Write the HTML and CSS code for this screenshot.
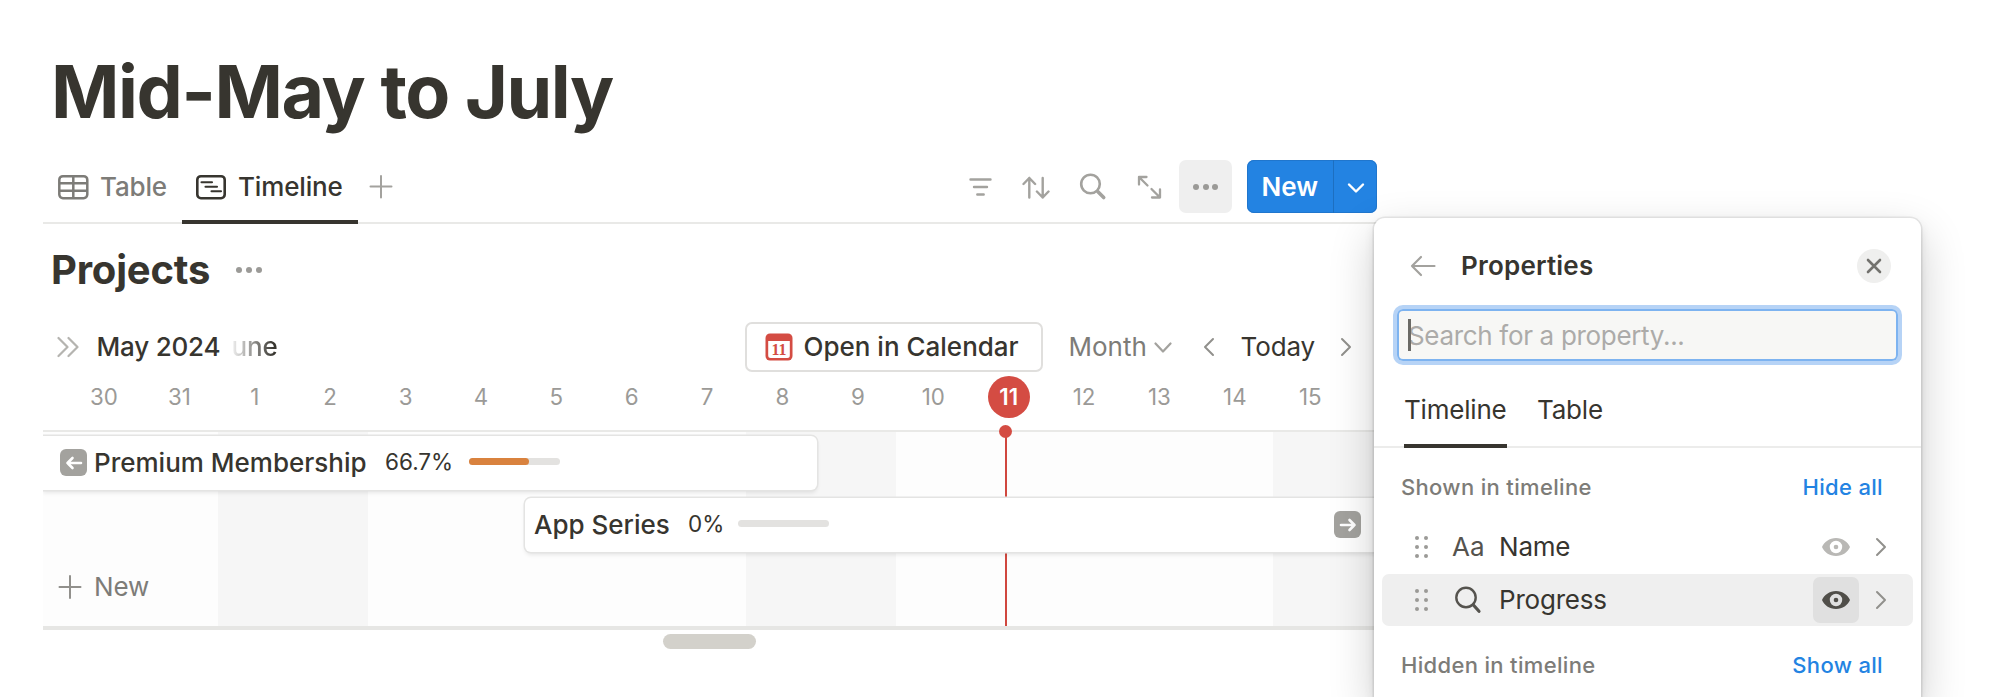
FILE: index.html
```html
<!DOCTYPE html>
<html lang="en">
<head>
<meta charset="utf-8">
<title>Mid-May to July</title>
<link rel="stylesheet" href="styles.css">
</head>
<body>
<main class="page">
  <h1 class="title">Mid-May to July</h1>

  <nav class="viewbar">
    <div class="tab tab-table">
      <svg class="icon" width="31" height="26" viewBox="0 0 31 26" fill="none" stroke="currentColor" stroke-width="2.5"><rect x="1.3" y="2.2" width="28" height="22" rx="3.6"/><path d="M1.3 9.3h28M1.3 16.7h28M15.3 2.2v22"/></svg>
      <span class="tab-label label-table">Table</span>
    </div>
    <div class="tab tab-timeline">
      <svg class="icon" width="31" height="26" viewBox="0 0 31 26" fill="none" stroke="currentColor" stroke-width="2.6" stroke-linecap="round"><rect x="1.3" y="2.2" width="27.4" height="22" rx="3.6"/><path stroke-width="2.1" d="M5.500 8.300h10.500M9.500 12.800h11.500M15.500 17.300h9.500"/></svg>
      <span class="tab-label label-timeline">Timeline</span>
    </div>
    <svg class="icon add-view" width="24" height="24" viewBox="0 0 24 24" fill="none" stroke="currentColor" stroke-width="2" stroke-linecap="round"><path d="M1.500 11.500h21M12 1v21.500"/></svg>

    <div class="actions">
      <span class="action"><svg width="28" height="28" viewBox="0 0 28 28" fill="none" stroke="currentColor" stroke-width="2.400" stroke-linecap="round"><path d="M4.500 6.500h20M8 14h13M11.300 21.500h6.400"/></svg></span>
      <span class="action"><svg width="28" height="28" viewBox="0 0 28 28" fill="none" stroke="currentColor" stroke-width="2.400" stroke-linecap="round" stroke-linejoin="round"><path d="M7.300 24.500V5M1.500 11l5.800-6 5.800 6M20.700 5v19.500M14.900 18.500l5.800 6 5.800-6"/></svg></span>
      <span class="action"><svg width="28" height="28" viewBox="0 0 28 28" fill="none" stroke="currentColor" stroke-width="2.600" stroke-linecap="round"><circle cx="11.500" cy="11" r="9.300"/><path stroke-width="3.600" d="M18.700 18.500l6 6"/></svg></span>
      <span class="action"><svg width="28" height="28" viewBox="0 0 28 28" fill="none" stroke="currentColor" stroke-width="2.300" stroke-linecap="round" stroke-linejoin="round"><path d="M11.500 4H4v7.500M4 4l8.500 8.500M17 24.500h8v-8M25 24.500L16.500 16"/></svg></span>
      <span class="action"><span class="more"><i></i><i></i><i></i></span></span>
      <div class="new-button">
        <span class="new-label">New</span>
        <span class="new-caret"><svg width="18" height="12" viewBox="0 0 18 12" fill="none" stroke="currentColor" stroke-width="2.400" stroke-linecap="round" stroke-linejoin="round"><path d="M2 2.500l7 7 7-7"/></svg></span>
      </div>
    </div>
  </nav>

  <header class="database">
    <h2 class="database-name">Projects</h2>
    <span class="dots"><i></i><i></i><i></i></span>
  </header>

  <div class="controls">
    <svg class="expand" width="23" height="22" viewBox="0 0 23 22" fill="none" stroke="currentColor" stroke-width="2.200" stroke-linecap="round" stroke-linejoin="round"><path d="M1.500 2l9 9-9 9M11.500 2l9 9-9 9"/></svg>
    <span class="month">May 2024</span>
    <span class="next-month">une</span>
    <button class="calendar-button">
      <svg width="28" height="28" viewBox="0 0 28 28"><rect x=".5" y=".5" width="27" height="27" rx="4.500" fill="#d44c43"/><path d="M3.200 8h21.600v14.500a2.500 2.500 0 0 1-2.500 2.500H5.700a2.500 2.500 0 0 1-2.500-2.500z" fill="#fff"/><text class="calendar-day" x="14" y="22.300" text-anchor="middle">11</text></svg>
      <span class="calendar-label">Open in Calendar</span>
    </button>
    <span class="scale">Month</span>
    <svg class="scale-caret" width="18" height="12" viewBox="0 0 18 12" fill="none" stroke="currentColor" stroke-width="2.200" stroke-linecap="round" stroke-linejoin="round"><path d="M1.500 1.500l7.500 8 7.500-8"/></svg>
    <svg class="prev" width="12" height="20" viewBox="0 0 12 20" fill="none" stroke="currentColor" stroke-width="2" stroke-linecap="round" stroke-linejoin="round"><path d="M10 2l-8 8 8 8"/></svg>
    <span class="today">Today</span>
    <svg class="next" width="12" height="20" viewBox="0 0 12 20" fill="none" stroke="currentColor" stroke-width="2" stroke-linecap="round" stroke-linejoin="round"><path d="M2 2l8 8-8 8"/></svg>
  </div>

  <div class="days">
    <span>30</span><span>31</span><span>1</span><span>2</span><span>3</span><span>4</span><span>5</span><span>6</span><span>7</span><span>8</span><span>9</span><span>10</span><span><b>11</b></span><span>12</span><span>13</span><span>14</span><span>15</span>
  </div>

  <section class="timeline">
    <div class="now"></div>
    <div class="bar bar-premium">
      <span class="jump"><svg width="18" height="16" viewBox="0 0 18 16" fill="none" stroke="currentColor" stroke-width="2.600" stroke-linecap="round" stroke-linejoin="round"><path d="M16 8H2.500M7.500 3l-5 5 5 5"/></svg></span>
      <span class="bar-name name-premium">Premium Membership</span>
      <span class="percent percent-premium">66.7%</span>
      <span class="meter"><span class="meter-fill" style="width:66.7%"></span></span>
    </div>
    <div class="bar bar-app">
      <span class="bar-name name-app">App Series</span>
      <span class="percent percent-app">0%</span>
      <span class="meter"></span>
      <span class="jump jump-right"><svg width="18" height="16" viewBox="0 0 18 16" fill="none" stroke="currentColor" stroke-width="2.600" stroke-linecap="round" stroke-linejoin="round"><path d="M2 8h13.500M10.500 3l5 5-5 5"/></svg></span>
    </div>
    <div class="new-row">
      <svg width="24" height="24" viewBox="0 0 24 24" fill="none" stroke="currentColor" stroke-width="2" stroke-linecap="round"><path d="M1.500 12h21M12 1v22"/></svg>
      <span class="new-row-label">New</span>
    </div>
  </section>
  <div class="scrollbar"></div>
</main>

<aside class="popover">
  <header class="popover-head">
    <svg class="back" width="26" height="22" viewBox="0 0 26 22" fill="none" stroke="currentColor" stroke-width="2.200" stroke-linecap="round" stroke-linejoin="round"><path d="M24.500 11H2M11 2l-9 9 9 9"/></svg>
    <span class="popover-title">Properties</span>
    <span class="close"><svg width="16" height="16" viewBox="0 0 16 16" fill="none" stroke="currentColor" stroke-width="2.600" stroke-linecap="round"><path d="M2 2l12 12M14 2L2 14"/></svg></span>
  </header>
  <div class="search"><span class="caret"></span><span class="placeholder">Search for a property...</span></div>
  <div class="popover-tabs">
    <span class="popover-tab active">Timeline</span>
    <span class="popover-tab">Table</span>
  </div>
  <div class="group group-shown"><span class="group-shown-label">Shown in timeline</span><a class="hide-all">Hide all</a></div>
  <div class="property">
    <span class="grip"><i></i><i></i><i></i><i></i><i></i><i></i></span>
    <span class="property-icon"><span class="aa">Aa</span></span>
    <span class="property-name name-name">Name</span>
    <span class="eye eye-muted"><svg width="30" height="20" viewBox="0 0 30 20"><path fill="currentColor" fill-rule="evenodd" d="M1 10C3 5 8.500 1 15 1s12 4 14 9c-2 5-7.500 9-14 9S3 15 1 10zm7.800 0a6.200 6.200 0 1 0 12.400 0 6.200 6.200 0 1 0-12.400 0z"/><circle cx="15" cy="10" r="2.300" fill="currentColor"/></svg></span>
    <svg class="more-arrow" width="12" height="20" viewBox="0 0 12 20" fill="none" stroke="currentColor" stroke-width="2" stroke-linecap="round" stroke-linejoin="round"><path d="M2 2l8 8-8 8"/></svg>
  </div>
  <div class="property hovered">
    <span class="grip"><i></i><i></i><i></i><i></i><i></i><i></i></span>
    <span class="property-icon"><svg width="30" height="28" viewBox="0 0 30 28" fill="none" stroke="currentColor" stroke-width="2.400" stroke-linecap="round"><circle cx="14" cy="11.500" r="9.700"/><path stroke-width="3.200" d="M21.400 19l5.600 6.300"/></svg></span>
    <span class="property-name name-progress">Progress</span>
    <span class="eye"><svg width="30" height="20" viewBox="0 0 30 20"><path fill="currentColor" fill-rule="evenodd" d="M1 10C3 5 8.500 1 15 1s12 4 14 9c-2 5-7.500 9-14 9S3 15 1 10zm7.800 0a6.200 6.200 0 1 0 12.400 0 6.200 6.200 0 1 0-12.400 0z"/><circle cx="15" cy="10" r="2.300" fill="currentColor"/></svg></span>
    <svg class="more-arrow" width="12" height="20" viewBox="0 0 12 20" fill="none" stroke="currentColor" stroke-width="2" stroke-linecap="round" stroke-linejoin="round"><path d="M2 2l8 8-8 8"/></svg>
  </div>
  <div class="group group-hidden"><span class="group-hidden-label">Hidden in timeline</span><a class="show-all">Show all</a></div>
</aside>
</body>
</html>
```

FILE: styles.css
```css
* { box-sizing: border-box; }

body {
  margin: 0;
  height: 697px;
  overflow: hidden;
  position: relative;
  background: #fff;
  color: #37352f;
  font-family: Inter, "Liberation Sans", sans-serif;
  font-size: 26px;
  line-height: 32px;
}

svg { display: block; flex: none; }
span { white-space: nowrap; }

.page { width: 1377px; padding: 46px 0 0 43px; }

.title {
  margin: 0 0 12px;
  padding-left: 8px;
  font-size: 73.5px;
  line-height: 92px;
  font-weight: 700;
  letter-spacing: -1.4px;
  white-space: nowrap;
}

/* View tabs and toolbar */
.viewbar {
  display: flex;
  align-items: center;
  height: 74px;
  box-shadow: inset 0 -2px 0 #e9e9e7;
}
.tab {
  display: flex;
  align-items: center;
  gap: 11px;
  height: 74px;
  padding-left: 15px;
  flex: none;
  font-weight: 500;
}
.tab-label { letter-spacing: -.15px; }
.tab-table { width: 139px; color: #7d7c78; }
.tab-timeline { width: 176px; padding-left: 14px; border-bottom: 4px solid #37352f; border-top: 4px solid transparent; }
.add-view { margin-left: 11px; color: #a3a29e; }

.actions { display: flex; align-items: center; margin: -1px 0 0 auto; color: #a3a29e; }
.action { width: 56.5px; display: flex; justify-content: center; }
.more {
  width: 53px;
  height: 53px;
  border-radius: 7px;
  background: #efefef;
  display: flex;
  align-items: center;
  justify-content: center;
  gap: 3.500px;
}
.more i, .dots i { width: 6px; height: 6px; border-radius: 50%; background: #9b9a97; }
.new-button {
  display: flex;
  margin-left: 13px;
  width: 130px;
  height: 53px;
  border-radius: 7px;
  background: #2383e2;
  color: #fff;
  box-shadow: inset 0 0 0 1px #2076cd;
}
.new-label {
  width: 87px;
  line-height: 53px;
  padding-left: 14.500px;
  border-right: 1px solid #1d6fc0;
  font-weight: 600;
}
.new-caret { flex: 1; display: flex; align-items: center; justify-content: center; padding-top: 2px; }

/* Database heading */
.database { display: flex; align-items: center; height: 92px; padding-left: 8px; }
.database-name { margin: 0; width: 185px; font-size: 40px; line-height: 48px; font-weight: 700; letter-spacing: -.2px; }
.dots { display: flex; gap: 4.200px; }

/* Timeline controls */
.controls { display: flex; align-items: center; height: 63px; margin-top: -1px; font-weight: 500; }
.expand { margin-left: 14px; color: #b5b4b0; }
.month { width: 135px; margin-left: 16.500px; letter-spacing: -.2px; }
.next-month {
  width: 513px;
  letter-spacing: -.2px;
  background: linear-gradient(90deg, #f0f0f0 0, #37352f 42px);
  background-clip: text;
  color: transparent;
}
.calendar-button {
  display: flex;
  align-items: center;
  gap: 11px;
  flex: none;
  width: 298px;
  height: 50px;
  margin: 0;
  padding: 0 0 0 18px;
  border: 2px solid #e0dfdd;
  border-radius: 7px;
  background: #fff;
  color: inherit;
  font: inherit;
}
.calendar-day { font: 700 16px "Liberation Serif", serif; fill: #d44c43; }
.scale { width: 85px; margin-left: 26px; color: #7d7c78; font-weight: 400; }
.scale-caret { color: #a3a29e; margin-top: 2px; }
.prev { margin-left: 31px; color: #91908c; }
.today { width: 99px; margin-left: 26px; font-weight: 400; letter-spacing: -.1px; }
.next { color: #91908c; }

.days {
  display: flex;
  align-items: center;
  height: 38px;
  padding-left: 23.300px;
  color: #9b9a97;
  font-size: 22.300px;
}
.days span { flex: none; width: 75.400px; display: flex; justify-content: center; }
.days b {
  width: 42px;
  height: 42px;
  margin: -3px 0;
  line-height: 42px;
  border-radius: 50%;
  background: #d44c43;
  color: #fff;
  font-weight: 600;
  text-align: center;
}

/* Timeline canvas: shaded bands are weekends */
.timeline {
  position: relative;
  margin-top: 14px;
  height: 200px;
  padding-top: 3px;
  border-top: 2px solid #e9e9e7;
  border-bottom: 4px solid #e6e6e4;
  background: linear-gradient(90deg, #fdfdfd 175px, #f6f6f6 175px 325.500px, #fdfdfd 325.500px 703px, #f6f6f6 703px 853.500px, #fdfdfd 853.500px 1230.500px, #f6f6f6 1230.500px);
}
.now { position: absolute; left: 961.500px; top: 0; bottom: 0; width: 2px; background: #d0473e; }
.now::before {
  content: "";
  position: absolute;
  left: -5.500px;
  top: -7.500px;
  width: 13px;
  height: 13px;
  border-radius: 50%;
  background: #d44c43;
}
.bar {
  position: relative;
  display: flex;
  align-items: center;
  height: 54px;
  background: #fff;
  font-weight: 500;
  box-shadow: 0 0 0 1.500px #e4e4e3, 0 3px 4px rgba(15, 15, 15, .09);
}
.bar-premium { width: 774px; margin-top: .5px; padding-left: 17px; border-radius: 0 6px 6px 0; clip-path: inset(-3px -8px -10px 0); }
.bar-app { margin: 8px 0 0 482px; width: 852px; padding-left: 9px; border-radius: 6px 0 0 6px; }
.jump {
  flex: none;
  width: 27px;
  height: 27px;
  border-radius: 6px;
  background: #a3a29e;
  color: #fff;
  display: flex;
  align-items: center;
  justify-content: center;
}
.jump-right { margin-left: 505px; }
.name-premium { margin-left: 7px; width: 291px; }
.name-app { width: 154px; }
.percent { font-size: 22.500px; font-weight: 400; position: relative; top: -1px; }
.percent-premium { width: 83.500px; }
.percent-app { width: 50px; }
.meter { width: 91px; height: 7px; border-radius: 4px; background: #e3e2e0; position: relative; top: -1px; }
.meter-fill { display: block; height: 7px; border-radius: 4px; background: #d9823e; }

.new-row { display: flex; align-items: center; gap: 12px; margin-top: 19px; padding-left: 15px; height: 32px; color: #91908c; }
.new-row-label { color: #7d7c78; letter-spacing: -.1px; }

.scrollbar { width: 93px; height: 15px; margin: 4px 0 0 620px; border-radius: 8px; background: #d3d1cb; }

/* Properties popover */
.popover {
  position: absolute;
  left: 1374px;
  top: 218px;
  bottom: 0;
  width: 547px;
  overflow: hidden;
  border-radius: 11px 11px 0 0;
  background: #fff;
  box-shadow: 0 0 0 1.500px rgba(15, 15, 15, .08), 0 5px 11px rgba(15, 15, 15, .1), 0 17px 46px rgba(15, 15, 15, .2);
}
.popover-head { display: flex; align-items: center; height: 95px; padding: 0 30px 0 36px; }
.back { color: #a3a29e; }
.popover-title { margin-left: 25px; font-weight: 600; letter-spacing: .2px; padding-top: 1px; }
.close {
  width: 34px;
  height: 34px;
  margin-left: auto;
  border-radius: 50%;
  background: #efefee;
  color: #73726e;
  display: flex;
  align-items: center;
  justify-content: center;
}
.search {
  display: flex;
  align-items: center;
  width: 501px;
  height: 52px;
  margin: -4px 0 0 23px;
  padding-left: 11px;
  border-radius: 6px;
  background: #f7f7f5;
  box-shadow: inset 0 0 0 2px #7db3f0, 0 0 0 4px #b6d3f6;
}
.caret { width: 3px; height: 32px; margin-right: -3px; background: #6b6a66; position: relative; }
.placeholder { color: #acaba9; letter-spacing: -.32px; padding-top: 1px; }
.popover-tabs {
  display: flex;
  gap: 30px;
  height: 87px;
  padding-left: 30px;
  box-shadow: inset 0 -2px 0 #ececeb;
}
.popover-tab { padding-top: 33px; letter-spacing: -.2px; }
.active { width: 103px; border-bottom: 4px solid #37352f; }

.group {
  display: flex;
  align-items: center;
  justify-content: space-between;
  padding: 0 38px 0 27px;
  font-size: 22px;
  font-weight: 500;
  letter-spacing: .33px;
  color: #7d7c78;
}
.group a { color: #2383e2; }
.group-shown { height: 73px; padding-top: 5px; }
.group-hidden { height: 78px; }

.property { display: flex; align-items: center; height: 52.500px; margin: 0 8px; padding-left: 33px; border-radius: 7px; }
.hovered { background: #efefef; }
.grip { width: 13px; display: grid; grid-template-columns: 4px 4px; gap: 5px; }
.grip i { width: 4px; height: 4px; border-radius: 50%; background: #9b9a97; }
.property-icon { width: 40px; margin-left: 24px; color: #55534e; }
.property-name { width: 314px; margin-left: 7px; letter-spacing: -.2px; }
.eye {
  flex: none;
  width: 46px;
  height: 46px;
  border-radius: 7px;
  display: flex;
  align-items: center;
  justify-content: center;
  color: #504e49;
}
.eye-muted { color: #b9b8b5; }
.hovered .eye { background: #e0e0e0; }
.more-arrow { margin-left: 16px; color: #91908c; }
```
